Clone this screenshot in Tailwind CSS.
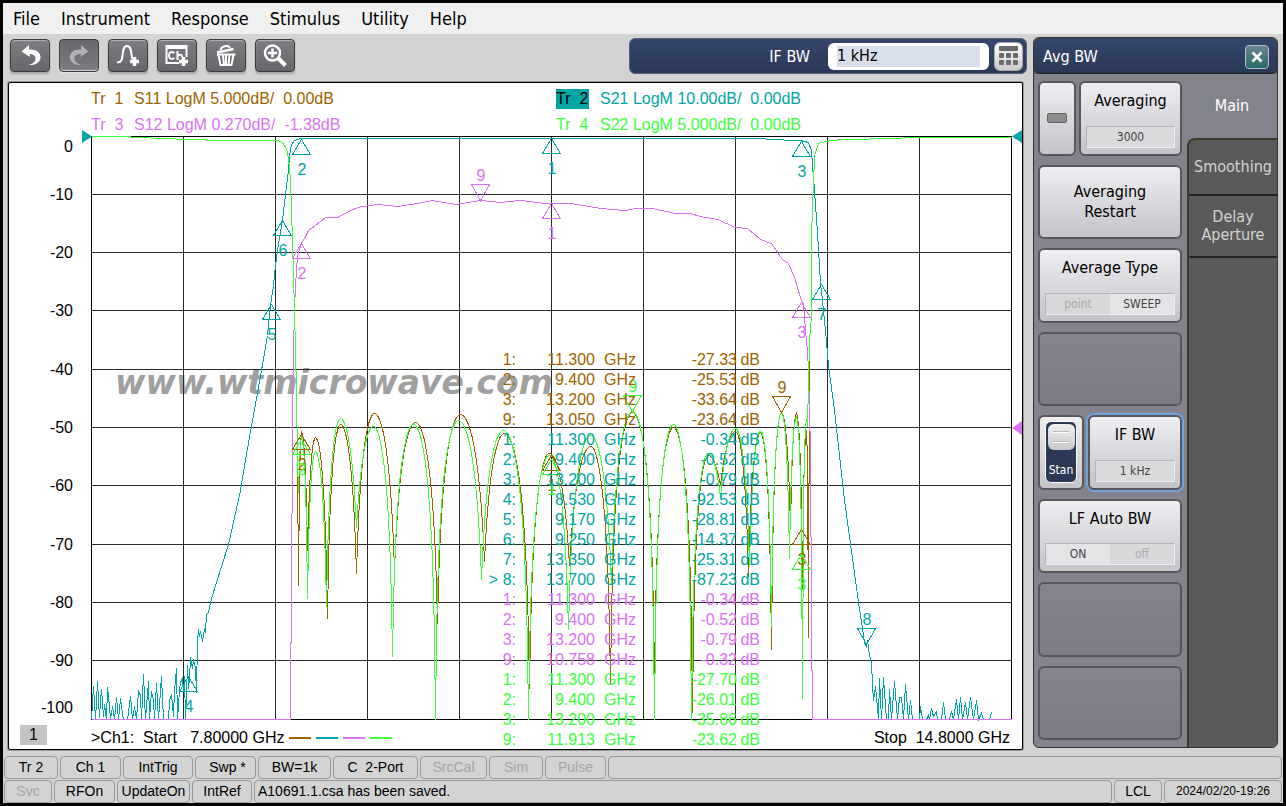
<!DOCTYPE html>
<html lang="en">

<head>
  <meta charset="UTF-8">
  <meta name="viewport" content="width=device-width, initial-scale=1.0">
  <title>Network Analyzer</title>
  <script src="https://cdn.jsdelivr.net/npm/@tailwindcss/browser@4"></script>
</head>

<body class="min-h-screen flex flex-col border-[3px] border-black bg-[#d3d3d3] text-black font-['DejaVu_Sans_Condensed','Noto_Sans',sans-serif]">
  <nav class="h-[31px] shrink-0 flex items-center gap-[21px] px-[10px] bg-[#f0f0f0] text-[18px]">
    <a href="#">File</a>
    <a href="#">Instrument</a>
    <a href="#">Response</a>
    <a href="#">Stimulus</a>
    <a href="#">Utility</a>
    <a href="#">Help</a>
  </nav>

  <main class="flex flex-1">
    <div class="flex-1 min-w-0 flex flex-col">
      <!-- Toolbar -->
      <div class="h-12 shrink-0 flex justify-between items-start pt-1 pl-[7px] pr-[6px]">
        <div class="flex gap-[9px] pt-[1px]">
          <button aria-label="Undo" class="w-10 h-[33px] rounded border border-[#3a3a3c] bg-linear-to-b from-[#7e7e82] to-[#66666b] shadow-[inset_0_1px_1px_#b5b5b8,0_2px_2px_#a5a5a5]">
            <svg viewBox="1 1 38 31" class="w-full h-full" fill="#fff"><path d="M11.500 12.500 19 6v4.500c7-.5 12 3 11.500 8.500-.5 4.500-5 7.500-12 7 4.500-1 7-3.500 7-6.500 0-3.500-3-4.500-6-4.500L20 18z"/></svg>
          </button>
          <button aria-label="Redo" class="w-10 h-[33px] rounded border border-[#3a3a3c] bg-linear-to-b from-[#66666b] to-[#7c7c80] shadow-[inset_0_-1px_1px_#d5d5d8,0_1px_1px_#e5e5e5]">
            <svg viewBox="1 1 38 31" class="w-full h-full" fill="#b2b2b5"><path d="M29.500 12.500 22 6v4.500c-7-.5-11.500 3-11 8.500.5 4.500 5 7.500 11.500 7-4.500-1-7-3.500-7-6.500 0-3.500 3-4.500 6.500-4.500L21 18z"/></svg>
          </button>
          <button aria-label="Add trace" class="w-10 h-[33px] rounded border border-[#3a3a3c] bg-linear-to-b from-[#7e7e82] to-[#66666b] shadow-[inset_0_1px_1px_#b5b5b8,0_2px_2px_#a5a5a5]">
            <svg viewBox="1 1 38 31" class="w-full h-full" fill="none" stroke="#fff"><path stroke-width="2" d="M9 23.500c4 0 5-2 5.500-7S15.500 7 19 7s4 4 4.500 8 .5 5 2 5"/><path stroke-width="3.500" d="M26.500 18v9M22 22.500h9"/></svg>
          </button>
          <button aria-label="Add channel" class="w-10 h-[33px] rounded border border-[#3a3a3c] bg-linear-to-b from-[#7e7e82] to-[#66666b] shadow-[inset_0_1px_1px_#b5b5b8,0_2px_2px_#a5a5a5]">
            <svg viewBox="1 1 38 31" class="w-full h-full" fill="none" stroke="#fff"><path stroke-width="2" d="M22 24H9.500V7h20v11"/><path stroke-width="4" d="M9 8h21"/><path stroke-width="2" d="M17.500 14c-3.500-2-5.500-.5-5.500 2.500s2 4.500 5.500 2.500M20.500 12v9M20.500 17c2.500-2 4.500-1.500 4.500 1"/><path stroke-width="3.500" d="M26.500 18v9M22 22.500h9"/></svg>
          </button>
          <button aria-label="Delete" class="w-10 h-[33px] rounded border border-[#3a3a3c] bg-linear-to-b from-[#7e7e82] to-[#66666b] shadow-[inset_0_1px_1px_#b5b5b8,0_2px_2px_#a5a5a5]">
            <svg viewBox="1 1 38 31" class="w-full h-full" fill="none" stroke="#fff"><path stroke-width="2.500" d="M11 13.500 27.500 10"/><path stroke-width="2" d="M14.500 11.500c.5-4.500 7.500-6 9.500-2.500M11 15.500h18.500M12.500 16l2 10h11l2-10M17 16l1 10M20 16v10M23.500 16l-1 10"/></svg>
          </button>
          <button aria-label="Zoom" class="w-10 h-[33px] rounded border border-[#3a3a3c] bg-linear-to-b from-[#7e7e82] to-[#66666b] shadow-[inset_0_1px_1px_#b5b5b8,0_2px_2px_#a5a5a5]">
            <svg viewBox="1 1 38 31" class="w-full h-full" fill="none" stroke="#fff"><circle cx="17.500" cy="14" r="7.500" stroke-width="2.500"/><path stroke-width="2.500" d="M17.500 9.500v9M13 14h9"/><path stroke-width="4" d="m23.500 19.500 7 7"/></svg>
          </button>
        </div>
        <div class="w-[398px] h-9 flex items-center justify-end pr-[3px] rounded-md border border-[#53617c] bg-linear-to-b from-[#34466b] to-[#2b3957]">
          <label for="ifbw" class="text-white text-[16px] mr-[18px] pt-[2px]">IF BW</label>
          <div class="w-[161px] h-[27px] px-[9px] py-[3px] rounded-md bg-white">
            <input id="ifbw" type="text" value="1 kHz" class="block w-full h-[21px] bg-[#d9dfea] text-[16px] outline-none">
          </div>
          <button aria-label="Keypad" class="ml-[5px] w-[29px] h-[29px] flex items-center justify-center rounded-md border border-[#a9a9ae] bg-linear-to-b from-white to-[#c9c9cd]">
            <svg width="19" height="20" viewBox="0 0 19 20" fill="#6a6a6a"><rect width="19" height="5" rx="1"/><rect y="7" width="5" height="5" rx="1"/><rect x="7" y="7" width="5" height="5" rx="1"/><rect x="14" y="7" width="5" height="5" rx="1"/><rect y="14" width="5" height="5" rx="1"/><rect x="7" y="14" width="5" height="5" rx="1"/><rect x="14" y="14" width="5" height="5" rx="1"/></svg>
          </button>
        </div>
      </div>

      <!-- Measurement window -->
      <section class="relative ml-[5px] mr-[10px] border border-black rounded-xs bg-white shadow-[0_0_0_1px_#999] font-['Liberation_Sans',Arial,sans-serif] text-[16px]">
        <div class="h-[53px] pl-[82px] pt-[3px] grid grid-cols-[465px_1fr] auto-rows-[26px] items-center whitespace-pre">
          <div class="flex text-[#9c6400]"><span class="w-[43px]">Tr  1</span>S11 LogM 5.000dB/  0.00dB</div>
          <div class="flex items-center text-[#00a5a5]"><span class="w-[33px] leading-5 mr-[11px] bg-[#00a5a5] text-black">Tr  2</span>S21 LogM 10.00dB/  0.00dB</div>
          <div class="flex text-[#d973f5]"><span class="w-[43px]">Tr  3</span>S12 LogM 0.270dB/  -1.38dB</div>
          <div class="flex text-[#3cff3c]"><span class="w-[44px]">Tr  4</span>S22 LogM 5.000dB/  0.00dB</div>
        </div>

        <svg id="plot" viewBox="9 136 1013 584" class="block w-full overflow-visible" fill="none">
          <text x="115" y="394" fill="#a0a0a0" font-family="DejaVu Sans, Verdana, sans-serif" font-size="33" font-weight="700" font-style="italic">www.wtmicrowave.com</text>
          <g transform="translate(.5 .5)" shape-rendering="crispEdges">
            <path stroke="#2a2a2a" d="M183 136v583M275 136v583M367 136v583M459 136v583M551 136v583M643 136v583M735 136v583M827 136v583M919 136v583M91 194h920M91 252h920M91 310h920M91 369h920M91 427h920M91 485h920M91 544h920M91 602h920M91 660h920"/>
            <path stroke="#000" d="M91 136h920v583H91z"/>
            <path id="s11" stroke="#9c6400"/>
            <path stroke="#00a5a5" d="M91 719 93 686 95 719 97 681 99 717 100 700 101 689 103 716 104 704 106 719 107 687 109 706 110 719 112 706 114 719 116 697 118 719 120 698 122 713 123 719 127 719 130 696 132 719 134 706 136 719 138 691 140 695 141 719 143 674 145 719 148 681 149 719 151 691 153 700 154 719 156 683 158 719 161 676 163 719 168 719 169 700 171 694 173 716 174 690 176 668 177 719 179 690 180 682 182 678 183 691 184 676 185 719 187 665 188 688 189 678 190 657 192 668 193 659 195 668 196 692 197 640 198 629 199 636 200 631 202 641 204 628 205 632 206 614 208 612 211 598 216 582 228 544 240 490 247 448 252 420 256 398 261 370 267 335 270 305 273 285 275 265 277 250 280 232 282 220 285 194 288 170 289 155 291 144 294 140 300 138 765 138 766 139 800 140 808 142 811 150 812 165 814 190 817 232 820 283 822 300 825 330 828 365 834 410 844 500 853 565 858 602 862 628 864 642 866 646 867 640 869 655 871 662 872 684 873 700 875 686 878 719 879 678 881 719 883 677 886 719 888 719 889 689 891 719 894 681 897 719 899 697 901 697 903 719 905 684 908 719 910 700 912 719 919 719 920 706 922 719 926 719 928 715 929 719 931 708 933 716 936 711 937 719 941 719 943 702 945 719 949 719 951 711 953 719 956 699 958 719 960 697 962 719 965 702 967 719 970 697 973 719 976 700 978 719 981 713 983 719 989 719 991 712"/>
            <path stroke="#d973f5" d="M91 719H290V697L291 590 292 440 293 350 294 310 295 285 297 255 301 243 304 238 308 230 315 225 325 217 337 217 350 210 361 206 378 204 397 206 417 203 432 200 455 204 480 200 500 202 520 200 545 203 570 203 600 208 625 210 635 208 652 208 675 213 690 213 700 216 717 219 735 227 747 228 760 239 771 243 782 259 788 263 794 277 800 297 803 304 805 330 807 350 808 370 810 450 811 620 812 719H1011"/>
            <path id="s22" stroke="#3cff3c"/>
          </g>
          <path fill="#00a5a5" d="M92 136.500 82 130v13zM1012 136.500 1022 130v13z"/>
          <path fill="#d973f5" d="M1012 428 1022 421v14z"/>
          <g id="markers" font-family="Liberation Sans, Arial, sans-serif" font-size="16" text-anchor="middle"></g>
          <g fill="#000" font-family="Liberation Sans, Arial, sans-serif" font-size="16" text-anchor="end">
            <text x="73" y="152">0</text>
            <text x="73" y="200">-10</text>
            <text x="73" y="258">-20</text>
            <text x="73" y="316">-30</text>
            <text x="73" y="375">-40</text>
            <text x="73" y="433">-50</text>
            <text x="73" y="491">-60</text>
            <text x="73" y="550">-70</text>
            <text x="73" y="608">-80</text>
            <text x="73" y="666">-90</text>
            <text x="73" y="713">-100</text>
          </g>
        </svg>

        <div class="h-[29px] flex items-start pl-[11px] pr-[12px] pt-[5px] whitespace-pre leading-5">
          <span class="w-[27px] h-5 bg-[#c4c4c4] text-center">1</span>
          <span class="ml-[44px] pt-[3px]">&gt;Ch1:  Start   7.80000 GHz</span>
          <span class="ml-[5px] pt-[12px] flex gap-[5px]">
            <i class="w-[22px] h-[2px] bg-[#9c6400]"></i>
            <i class="w-[22px] h-[2px] bg-[#00a5a5]"></i>
            <i class="w-[22px] h-[2px] bg-[#d973f5]"></i>
            <i class="w-[22px] h-[2px] bg-[#3cff3c]"></i>
          </span>
          <span class="ml-auto pt-[3px]">Stop  14.8000 GHz</span>
        </div>

        <!-- Marker readout, floats over the plot -->
        <table class="absolute right-[262px] -bottom-px leading-5 text-right whitespace-pre">
          <tbody id="readout"></tbody>
        </table>
      </section>
    </div>

    <!-- Softkey panel -->
    <aside class="w-[245px] mt-[3px] mr-[5px] mb-[8px] shrink-0 flex flex-col rounded-md border border-[#33342a] bg-[#5a5a5a] overflow-hidden">
      <header class="h-9 shrink-0 flex items-center justify-between pl-[9px] pr-2 pt-[2px] rounded-md border-b border-[#222] bg-linear-to-b from-[#34466b] to-[#2b3957] text-white text-[16px]">
        Avg BW
        <button aria-label="Close" class="w-6 h-6 flex items-center justify-center rounded border border-[#b5bcc9] bg-linear-to-b from-[#6c8494] to-[#1f6c66]">
          <svg width="12" height="12" viewBox="0 0 12 12" stroke="#fff" stroke-width="2.500"><path d="m1.500 1.500 9 9M10.500 1.500l-9 9"/></svg>
        </button>
      </header>
      <div class="flex flex-1 bg-[#83838d]">
        <div class="w-[153px] grid grid-rows-8 gap-[9px] pt-[7px] pb-[7px] pl-1 pr-[5px] text-[16px] leading-5">
          <div class="flex gap-[3px]">
            <button aria-label="Averaging on or off" class="w-[38px] flex items-center justify-center rounded-md border-2 border-[#57575d] bg-linear-to-b from-[#efeff2] to-[#c3c3c8]"><span class="w-5 h-[10px] rounded-xs border border-[#666] bg-[#8c8c8c]"></span></button>
            <button class="flex-1 flex flex-col justify-between items-center px-[5px] pt-2 pb-[6px] rounded-md border-2 border-[#57575d] bg-linear-to-b from-[#efeff2] to-[#c3c3c8]">Averaging
              <span class="w-full h-[22px] leading-5 border border-t-[#b5b5b8] border-l-[#b5b5b8] border-[#eee] bg-[#dadadc] text-[#444] text-[12px]">3000</span></button>
          </div>
          <button class="rounded-md border-2 border-[#57575d] bg-linear-to-b from-[#efeff2] to-[#c3c3c8]">Averaging<br>Restart</button>
          <button class="flex flex-col justify-between items-center px-[5px] pt-2 pb-[6px] rounded-md border-2 border-[#57575d] bg-linear-to-b from-[#efeff2] to-[#c3c3c8]">Average Type
            <span class="w-full h-[22px] leading-5 flex border border-t-[#b5b5b8] border-l-[#b5b5b8] border-[#eee] bg-[#d8d8da] text-[12px]"><span class="flex-1 text-[#aaa]">point</span><span class="flex-1 bg-[#e4e4e6] text-[#444]">SWEEP</span></span></button>
          <button aria-label="Unused key 1" class="rounded-md border-2 border-[#55555b] bg-linear-to-b from-[#84848d] to-[#7c7c86]"></button>
          <div class="flex gap-[4px]">
            <button class="w-[46px] flex items-center justify-center rounded-md border-2 border-[#57575d] bg-linear-to-b from-[#efeff2] to-[#c3c3c8]">
              <span class="w-8 h-[62px] flex flex-col justify-between items-center rounded-md border border-white bg-[#2b3957] text-white text-[12px] pt-[2px] pb-[2px]">
                <span class="w-[27px] h-[26px] flex flex-col items-center justify-center gap-2 rounded-md bg-linear-to-b from-[#f0f0f0] to-[#c8c8cc]"><i class="w-4 h-[2px] bg-white border-t border-[#bbb]"></i><i class="w-4 h-[2px] bg-white border-t border-[#bbb]"></i></span>
                Stan</span></button>
            <button class="flex-1 flex flex-col justify-between items-center px-[5px] pt-2 pb-[6px] rounded-md border-2 border-[#57575d] bg-linear-to-b from-[#efeff2] to-[#c3c3c8] shadow-[0_0_0_2px_#6fa3dc]">IF BW
              <span class="w-full h-[22px] leading-5 border border-t-[#b5b5b8] border-l-[#b5b5b8] border-[#eee] bg-[#dadadc] text-[#444] text-[12px]">1 kHz</span></button>
          </div>
          <button class="flex flex-col justify-between items-center px-[5px] pt-2 pb-[6px] rounded-md border-2 border-[#57575d] bg-linear-to-b from-[#efeff2] to-[#c3c3c8]">LF Auto BW
            <span class="w-full h-[22px] leading-5 flex border border-t-[#b5b5b8] border-l-[#b5b5b8] border-[#eee] bg-[#d8d8da] text-[12px]"><span class="flex-1 bg-[#e4e4e6] text-[#444]">ON</span><span class="flex-1 text-[#aaa]">off</span></span></button>
          <button aria-label="Unused key 2" class="rounded-md border-2 border-[#55555b] bg-linear-to-b from-[#84848d] to-[#7c7c86]"></button>
          <button aria-label="Unused key 3" class="rounded-md border-2 border-[#55555b] bg-linear-to-b from-[#84848d] to-[#7c7c86]"></button>
        </div>
        <div class="flex-1 flex flex-col text-[16px] leading-[18px] text-[#d2d2d2]">
          <button class="h-16 text-white">Main</button>
          <div class="flex-1 flex flex-col rounded-tl-lg border-t-2 border-l-2 border-[#3a3b28] bg-[#5a5a5a]">
            <button class="h-14 border-b-2 border-[#222]">Smoothing</button>
            <button class="h-[62px] rounded-b-xs border-b-2 border-[#222]">Delay<br>Aperture</button>
          </div>
        </div>
      </div>
    </aside>
  </main>

  <footer class="shrink-0 px-[1px] flex flex-col gap-[1px] font-['Liberation_Sans',Arial,sans-serif] text-[14px] leading-[21px] text-center whitespace-pre">
    <div class="flex gap-[2px]">
      <span class="w-[54px] h-[23px] rounded border border-[#999]">Tr 2</span>
      <span class="w-[61px] h-[23px] rounded border border-[#999]">Ch 1</span>
      <span class="w-[70px] h-[23px] rounded border border-[#999]">IntTrig</span>
      <span class="w-[61px] h-[23px] rounded border border-[#999] pl-1">Swp *</span>
      <span class="w-[73px] h-[23px] rounded border border-[#999]">BW=1k</span>
      <span class="w-[85px] h-[23px] rounded border border-[#999]">C  2-Port</span>
      <span class="w-[67px] h-[23px] rounded border border-[#999] text-[#a5a5a5]">SrcCal</span>
      <span class="w-[54px] h-[23px] rounded border border-[#999] text-[#a5a5a5]">Sim</span>
      <span class="w-[61px] h-[23px] rounded border border-[#999] text-[#a5a5a5]">Pulse</span>
      <span class="flex-1 h-[23px] rounded border border-[#999]"></span>
    </div>
    <div class="flex gap-[2px]">
      <span class="w-12 h-[23px] rounded border border-[#999] text-[#a5a5a5]">Svc</span>
      <span class="w-[61px] h-[23px] rounded border border-[#999]">RFOn</span>
      <span class="w-[73px] h-[23px] rounded border border-[#999]">UpdateOn</span>
      <span class="w-[60px] h-[23px] rounded border border-[#999]">IntRef</span>
      <span class="flex-1 h-[23px] rounded border border-[#999] text-left pl-[3px]">A10691.1.csa has been saved.</span>
      <span class="w-12 h-[23px] rounded border border-[#999]">LCL</span>
      <span class="w-[118px] h-[23px] rounded border border-[#999] text-[12px]">2024/02/20-19:26</span>
    </div>
  </footer>

  <script>
    const BROWN = "#9c6400";
    const TEAL = "#00a5a5";
    const VIOLET = "#d973f5";
    const GREEN = "#3cff3c";

    // return loss ripple: [x, y] pairs, alternating null / peak
    const s11 = [[298, 585], [301, 432], [307, 550], [315, 437], [327, 618], [340, 424], [356, 573], [374, 413], [394, 570], [415, 422], [437, 623], [460, 414], [484, 561], [504, 433], [529, 688], [549, 453], [569, 565], [590, 446], [610, 684], [632, 412], [654, 675], [673, 427], [692, 712], [708, 455], [720, 485], [735, 431], [748, 576], [760, 432], [771, 649], [781, 412], [790, 527], [796, 413], [802, 588], [806, 430], [808, 637]];
    const s22 = [[298, 492], [301, 437], [307, 598], [315, 451], [326, 606], [340, 418], [356, 527], [373, 426], [392, 656], [413, 424], [435, 719], [458, 420], [481, 579], [503, 430], [528, 719], [549, 455], [568, 629], [590, 435], [611, 583], [632, 411], [654, 719], [673, 424], [691, 719], [708, 453], [720, 497], [735, 428], [749, 565], [760, 430], [771, 626], [781, 412], [789, 558], [796, 417], [802, 698], [806, 419], [808, 450]];
    const skirtLeft = "M91 136 120 136 160 138 190 139 220 140 275 140 281 141 286 148 288 158 290 180 292 240 294 310 296 390 297 460";
    const skirtRight = "809 340 811 316 811 245 812 200 813 185 814 155 818 143 825 141 840 139 900 138 905 137 1011 137";

    // drop in pixels of a log-magnitude lobe, 233px per decade
    function ripple(points) {
      let d = "";
      for (let i = 0; i < points.length - 1; i++) {
        const [x0, y0] = points[i];
        const [x1, y1] = points[i + 1];
        const [xp, yp, xn, yn] = y0 < y1 ? [x0, y0, x1, y1] : [x1, y1, x0, y0];
        const k = Math.acos(Math.pow(10, (yp - yn) / 233));
        for (let x = x0; x < x1; x++) {
          const t = Math.abs((x - xp) / (xn - xp));
          d += ` ${x} ${Math.round(yp - 233 * Math.log10(Math.cos(t * k)))}`;
        }
      }
      return d;
    }

    document.getElementById("s11").setAttribute("d", skirtLeft + ripple(s11) + " 808 637 " + skirtRight);
    document.getElementById("s22").setAttribute("d", skirtLeft + ripple(s22) + " " + skirtRight);

    // [x, y of the tip, label, color, points down]
    const markers = [
      [551, 455, 1, BROWN], [301, 434, 2, BROWN], [801, 529, 3, BROWN], [781, 412, 9, BROWN, true],
      [551, 138, 1, TEAL], [301, 139, 2, TEAL], [801, 141, 3, TEAL], [188, 676, 4, TEAL], [271, 304, 5, TEAL], [282, 220, 6, TEAL], [821, 284, 7, TEAL], [866, 644, 8, TEAL, true],
      [551, 203, 1, VIOLET], [301, 243, 2, VIOLET], [801, 302, 3, VIOLET], [480, 200, 9, VIOLET, true],
      [551, 459, 1, GREEN], [301, 439, 2, GREEN], [801, 554, 3, GREEN], [632, 411, 9, GREEN, true]
    ];
    document.getElementById("markers").innerHTML = markers.map(([x, y, label, color, down]) => `
      <path transform="translate(.5 .5)" shape-rendering="crispEdges" stroke="${color}" d="M${x} ${y}l-9 ${down ? -16 : 15}h18z"/>
      <text x="${x + 1}" y="${down ? y - 19 : y + 36}" fill="${color}">${label}</text>`).join("");

    const rows = [
      [BROWN, "1", "11.300", "-27.33"], [BROWN, "2", "9.400", "-25.53"], [BROWN, "3", "13.200", "-33.64"], [BROWN, "9", "13.050", "-23.64"],
      [TEAL, "1", "11.300", "-0.34"], [TEAL, "2", "9.400", "-0.52"], [TEAL, "3", "13.200", "-0.79"], [TEAL, "4", "8.530", "-92.53"],
      [TEAL, "5", "9.170", "-28.81"], [TEAL, "6", "9.250", "-14.37"], [TEAL, "7", "13.350", "-25.31"], [TEAL, "> 8", "13.700", "-87.23"],
      [VIOLET, "1", "11.300", "-0.34"], [VIOLET, "2", "9.400", "-0.52"], [VIOLET, "3", "13.200", "-0.79"], [VIOLET, "9", "10.758", "-0.32"],
      [GREEN, "1", "11.300", "-27.70"], [GREEN, "2", "9.400", "-26.01"], [GREEN, "3", "13.200", "-35.86"], [GREEN, "9", "11.913", "-23.62"]
    ];
    document.getElementById("readout").innerHTML = rows.map(([color, n, freq, level]) => `
      <tr style="color:${color}">
        <td>${n}:</td><td class="w-[79px]">${freq}</td><td class="w-[41px]">GHz</td><td class="w-[101px]">${level}</td><td class="w-[23px]">dB</td>
      </tr>`).join("");
  </script>
</body>

</html>
